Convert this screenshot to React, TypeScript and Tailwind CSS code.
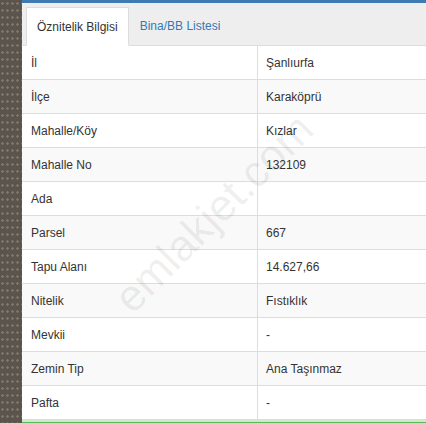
const ROWS: [string, string][] = [
  ['İl', 'Şanlıurfa'],
  ['İlçe', 'Karaköprü'],
  ['Mahalle/Köy', 'Kızlar'],
  ['Mahalle No', '132109'],
  ['Ada', ''],
  ['Parsel', '667'],
  ['Tapu Alanı', '14.627,66'],
  ['Nitelik', 'Fıstıklık'],
  ['Mevkii', '-'],
  ['Zemin Tip', 'Ana Taşınmaz'],
  ['Pafta', '-'],
]

export default function App() {
  return (
    <div
      className="w-[426px] h-[423px] overflow-hidden flex bg-white text-[12px] text-[#333]"
      style={{ fontFamily: '"Liberation Sans", Arial, sans-serif' }}
    >
      {/* map strip behind the panel */}
      <div className="w-[22px] shrink-0 bg-[#5a544d] bg-[radial-gradient(circle,_#7d766b_1px,_transparent_1.5px)] bg-[length:5px_7px]" />

      <div className="relative flex-1 flex flex-col min-w-0">
        <div className="h-[3px] bg-[#3f7bb3]" />

        {/* tabs */}
        <div className="h-[43px] flex items-end pl-[4px] bg-[#eeeeee] border-b border-[#dddddd]">
          <div className="h-[39px] -mb-px px-[10px] flex items-center bg-white border border-[#dddddd] border-b-white">
            Öznitelik Bilgisi
          </div>
          <div className="h-[39px] px-[11px] flex items-center text-[#337ab7]">Bina/BB Listesi</div>
        </div>

        {/* attribute table */}
        <div className="flex flex-col">
          {ROWS.map(([label, value], i) => (
            <div
              key={label}
              className={`h-[34px] grid grid-cols-[235px_1fr] border-b border-[#dddddd] ${
                i % 2 === 1 ? 'bg-[#f9f9f9]' : 'bg-white'
              }`}
            >
              <div className="pl-[9px] flex items-center">{label}</div>
              <div className="pl-[8px] flex items-center border-l border-[#dddddd]">{value}</div>
            </div>
          ))}
        </div>

        <div className="border-t-2 border-[#cfe8c8] border-b border-b-[#5cb85c] h-[3px]" />

        {/* watermark */}
        <div className="absolute left-[62px] top-[180px] -rotate-[45deg] text-[44px] text-black/[0.08] pointer-events-none select-none">
          emlakjet.com
        </div>
      </div>
    </div>
  )
}
